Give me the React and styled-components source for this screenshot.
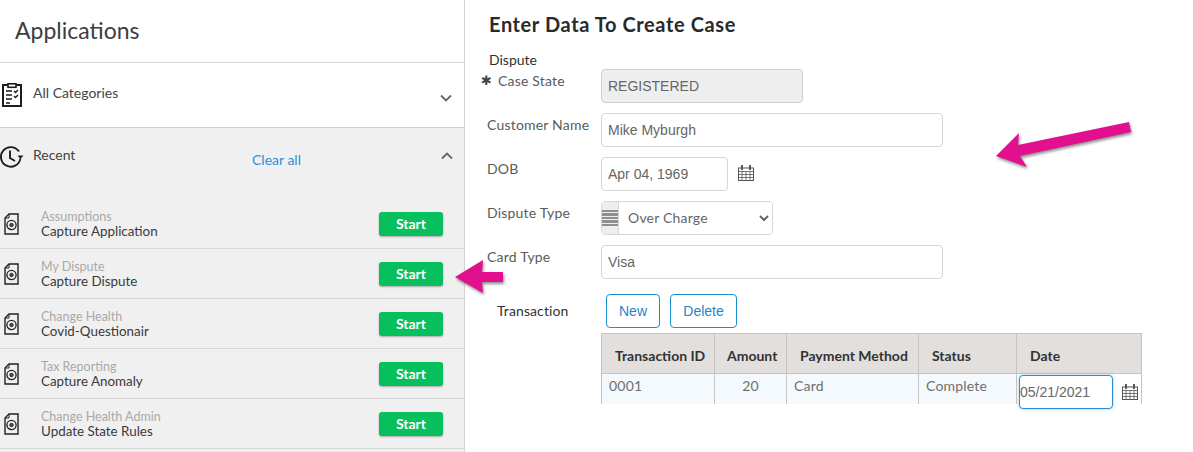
import React from 'react';
import styled, { createGlobalStyle } from 'styled-components';

const GlobalStyle = createGlobalStyle`
  html, body { margin: 0; padding: 0; background: #fff; }
  * { box-sizing: border-box; }
`;

const Page = styled.div`
  position: relative;
  display: flex;
  width: 1193px;
  height: 452px;
  overflow: hidden;
  background: #fff;
`;

/* ---------- left panel ---------- */
const Sidebar = styled.aside`
  width: 465px;
  height: 452px;
  flex: none;
  border-right: 1px solid #d4d4d4;
  font-family: "Lato", "Noto Sans", sans-serif;
  color: #333;
`;
const SideTitle = styled.h2`
  margin: 0;
  height: 63px;
  padding: 15px 0 0 15px;
  border-bottom: 1px solid #d6d6d6;
  font-size: 23px;
  line-height: 31px;
  font-weight: 400;
  color: #3d3d3d;
`;
const Section = styled.div`
  display: flex;
  align-items: flex-start;
  position: relative;
  height: ${(p) => p.$height}px;
  padding-top: ${(p) => p.$top}px;
  background: ${(p) => (p.$open ? '#f0f0f0' : '#fff')};
  border-bottom: ${(p) => (p.$open ? 'none' : '1px solid #d0d0d0')};
`;
const SectionLabel = styled.span`
  width: 219px;
  margin-left: 10px;
  font-size: 14px;
  line-height: 20px;
  color: #444;
`;
const ClearAll = styled.a`
  width: 170px;
  margin-top: 5px;
  font-size: 14px;
  line-height: 20px;
  color: #2a8fdc;
`;
const IconSlot = styled.span`
  display: block;
  width: ${(p) => 23 - (p.$left || 0)}px;
  margin-left: ${(p) => p.$left || 0}px;
  flex: none;
`;
const Chevron = styled.svg`
  width: 14px;
  height: 9px;
  margin-top: ${(p) => p.$top}px;
  margin-left: ${(p) => p.$left || 0}px;
  flex: none;
`;
const RecentList = styled.div`
  background: #f0f0f0;
  height: 254px;
`;
const RecentRow = styled.div`
  display: flex;
  align-items: center;
  height: 50px;
  padding: 0 21px 0 4px;
  border-bottom: 1px solid #d8d8d8;
`;
const DocIcon = styled.svg`
  width: 15px;
  height: 22px;
  flex: none;
`;
const RowText = styled.div`
  flex: 1;
  margin-left: 22px;
  padding-top: 1px;
`;
const RowCategory = styled.div`
  font-size: 12.5px;
  line-height: 15px;
  color: #a9a9a9;
`;
const RowName = styled.div`
  font-size: 13.4px;
  line-height: 15px;
  color: #3a3a3a;
`;
const StartButton = styled.button`
  width: 64px;
  height: 24px;
  padding: 0;
  border: 0;
  border-radius: 3px;
  background: #07bf5c;
  box-shadow: 0 1px 2px rgba(0, 0, 0, 0.3);
  color: #fff;
  font-family: inherit;
  font-size: 14px;
  font-weight: 700;
`;

/* ---------- right form ---------- */
const Main = styled.main`
  flex: 1;
  padding: 13px 0 0 22px;
  font-family: "Lato", "Open Sans", sans-serif;
  color: #444;
`;
const Heading = styled.h1`
  margin: 0 0 0 2px;
  font-size: 20px;
  line-height: 22px;
  font-weight: 700;
  letter-spacing: 0.6px;
  color: #2a2a2a;
`;
const GroupTitle = styled.div`
  margin: 17px 0 1px 2px;
  font-size: 14px;
  line-height: 16px;
  color: #2f2f2f;
`;
const Form = styled.div`
  display: flex;
  flex-direction: column;
  gap: 10px;
`;
const Row = styled.div`
  display: flex;
  align-items: flex-start;
  height: 34px;
`;
const Label = styled.label`
  width: 114px;
  flex: none;
  padding-top: 3px;
  padding-left: ${(p) => (p.$required ? 11 : 0)}px;
  position: relative;
  font-size: 14px;
  line-height: 18px;
  letter-spacing: 0.2px;
  color: #5a5a5a;
`;
const Required = styled.span`
  position: absolute;
  left: -6px;
  top: 4px;
  font-family: "DejaVu Sans", sans-serif;
  font-size: 13px;
  line-height: 16px;
  color: #444;
`;
const TextInput = styled.input`
  width: ${(p) => p.$width}px;
  height: 34px;
  padding: 0 6px;
  border: 1px solid ${(p) => (p.$disabled ? '#cfcfcf' : '#d6d6d6')};
  border-radius: 4px;
  outline: none;
  background: ${(p) => (p.$disabled ? '#eeeeee' : '#fff')};
  font-family: "Liberation Sans", Arial, sans-serif;
  font-size: 14px;
  color: #666;
`;
const CalendarIcon = styled.svg`
  width: 16px;
  height: 16px;
  margin: ${(p) => p.$margin};
  flex: none;
`;
const SelectBox = styled.div`
  display: flex;
  width: 172px;
  height: 34px;
  border: 1px solid #d6d6d6;
  border-radius: 4px;
  overflow: hidden;
`;
const SelectAddon = styled.span`
  display: flex;
  flex-direction: column;
  justify-content: center;
  gap: 1px;
  width: 17px;
  flex: none;
  background: #eeeeee;
  border-right: 1px solid #d6d6d6;

  i {
    display: block;
    height: 2.4px;
    background: #909090;
  }
`;
const Select = styled.select`
  flex: 1;
  min-width: 0;
  border: 0;
  outline: none;
  padding: 0 0 2px 5px;
  background: #fff;
  font-family: "Lato", sans-serif;
  font-size: 14px;
  letter-spacing: 0.2px;
  color: #666;
`;
const ActionRow = styled.div`
  display: flex;
  align-items: center;
  gap: 10px;
  height: 34px;
  margin-top: 15px;
`;
const ActionLabel = styled.span`
  width: 99px;
  margin-left: 10px;
  padding-bottom: 2px;
  font-size: 14px;
  letter-spacing: 0.1px;
  color: #333;
`;
const OutlineButton = styled.button`
  width: ${(p) => p.$width}px;
  height: 34px;
  padding: 0;
  border: 1px solid #1b8ed0;
  border-radius: 4px;
  background: #fff;
  color: #1b86cc;
  font-family: "Liberation Sans", Arial, sans-serif;
  font-size: 14px;
`;
const Table = styled.table`
  width: 540px;
  margin: 5px 0 0 114px;
  border-collapse: collapse;
  table-layout: fixed;
`;
const HeadCell = styled.th`
  width: ${(p) => p.$width}px;
  height: 40px;
  padding: 3px 0 0 ${(p) => p.$pad}px;
  border: 1px solid #c4c4c4;
  background: #e2dfdd;
  text-align: left;
  font-size: 14px;
  font-weight: 700;
  color: #333;
`;
const Cell = styled.td`
  height: 30px;
  padding: 0 0 8px ${(p) => p.$pad}px;
  border: solid #c4c4c4;
  border-width: 0 1px;
  background: #f4f9fd;
  font-size: 14px;
  letter-spacing: 0.2px;
  color: #6e6e6e;
  text-align: ${(p) => p.$align || 'left'};
  white-space: nowrap;
`;
const DateCell = styled.td`
  height: 30px;
  padding: 0;
  border: solid #c4c4c4;
  border-width: 0 1px;
  background: #fff;
`;
const DateWrap = styled.div`
  display: flex;
  align-items: center;
  height: 30px;
  padding: 2px 0 0 2px;
`;
const DateInput = styled.input`
  width: 94px;
  height: 34px;
  margin-bottom: -4px;
  flex: none;
  padding: 0;
  border: 1px solid #2a8fd0;
  border-radius: 4px;
  outline: none;
  box-shadow: 0 0 3px rgba(40, 140, 210, 0.5);
  background: #fff;
  font-family: "Liberation Sans", Arial, sans-serif;
  font-size: 14px;
  color: #666;
`;

/* callout arrows pasted over the screenshot */
const Callout = styled.svg`
  position: absolute;
  left: ${(p) => p.$left}px;
  top: ${(p) => p.$top}px;
  overflow: visible;
  filter: drop-shadow(1px 2px 1.5px rgba(0, 0, 0, 0.45));
`;

const ClipboardGlyph = () => (
  <svg width="20" height="24" viewBox="0 0 20 24" fill="none" stroke="#1d1d1d" style={{ display: 'block' }}>
    <rect x="1" y="2" width="18" height="21" strokeWidth="2" />
    <rect x="6" y="0.8" width="8" height="3.5" fill="#fff" strokeWidth="1.6" />
    <path d="M4 8h6M4 12h6M4 16h6M4 20h4" strokeWidth="1.7" />
    <path d="M12 8l1.5 1.5L16 7M12 13l1.5 1.5L16 12" strokeWidth="1.4" />
  </svg>
);

const ClockGlyph = () => (
  <svg width="24" height="24" viewBox="0 0 24 24" fill="none" stroke="#1d1d1d" style={{ display: 'block' }}>
    <path d="M20.4 13.6A9.8 9.8 0 1 1 19 6.6" strokeWidth="1.9" />
    <path d="M10 5.5v7.5l5 3" strokeWidth="1.9" />
    <path d="M17.5 10.5h6l-3 3.6z" fill="#1d1d1d" stroke="none" />
  </svg>
);

const DocGlyph = () => (
  <DocIcon viewBox="0 0 15 22" fill="none" stroke="#222">
    <path d="M5 1h9v20H1V5z" strokeWidth="1.4" />
    <path d="M5 1v4H1" strokeWidth="1" />
    <circle cx="7.5" cy="12" r="4.6" strokeWidth="1.3" />
    <circle cx="7.5" cy="12" r="1.7" fill="#555" strokeWidth="1" />
  </DocIcon>
);

const CalendarGlyph = ({ margin }) => (
  <CalendarIcon $margin={margin} viewBox="0 0 16 16" fill="none" stroke="#555">
    <rect x="0.5" y="3" width="15" height="12.5" strokeWidth="1" />
    <path d="M0.5 6.5h15M0.5 9.5h15M0.5 12.5h15M4 6.5v9M8 6.5v9M12 6.5v9" strokeWidth="0.8" />
    <path d="M4 0.8v3.4M12 0.8v3.4" strokeWidth="2" strokeLinecap="round" />
  </CalendarIcon>
);

const recents = [
  ['Assumptions', 'Capture Application'],
  ['My Dispute', 'Capture Dispute'],
  ['Change Health', 'Covid-Questionair'],
  ['Tax Reporting', 'Capture Anomaly'],
  ['Change Health Admin', 'Update State Rules'],
];

export default function App() {
  return (
    <Page>
      <GlobalStyle />
      <Sidebar>
        <SideTitle>Applications</SideTitle>
        <Section $height={65} $top={20}>
          <IconSlot $left={2}><ClipboardGlyph /></IconSlot>
          <SectionLabel>All Categories</SectionLabel>
          <Chevron $top={11} $left={187} viewBox="0 0 14 9" fill="none" stroke="#666" strokeWidth="1.8">
            <path d="M2 1.5l5 5 5-5" />
          </Chevron>
        </Section>
        <Section $open $height={71} $top={17}>
          <IconSlot><ClockGlyph /></IconSlot>
          <SectionLabel>Recent</SectionLabel>
          <ClearAll>Clear all</ClearAll>
          <Chevron $top={6} $left={18} viewBox="0 0 14 9" fill="none" stroke="#666" strokeWidth="1.8">
            <path d="M2 7.5l5-5 5 5" />
          </Chevron>
        </Section>
        <RecentList>
          {recents.map(([category, name]) => (
            <RecentRow key={name}>
              <DocGlyph />
              <RowText>
                <RowCategory>{category}</RowCategory>
                <RowName>{name}</RowName>
              </RowText>
              <StartButton>Start</StartButton>
            </RecentRow>
          ))}
        </RecentList>
      </Sidebar>

      <Main>
        <Heading>Enter Data To Create Case</Heading>
        <GroupTitle>Dispute</GroupTitle>
        <Form>
          <Row>
            <Label $required><Required>✱</Required>Case State</Label>
            <TextInput $width={202} $disabled readOnly value="REGISTERED" />
          </Row>
          <Row>
            <Label>Customer Name</Label>
            <TextInput $width={342} readOnly value="Mike Myburgh" />
          </Row>
          <Row>
            <Label>DOB</Label>
            <TextInput $width={127} readOnly value="Apr 04, 1969" />
            <CalendarGlyph margin="8px 0 0 10px" />
          </Row>
          <Row>
            <Label>Dispute Type</Label>
            <SelectBox>
              <SelectAddon><i /><i /><i /><i /><i /></SelectAddon>
              <Select defaultValue="Over Charge">
                <option>Over Charge</option>
              </Select>
            </SelectBox>
          </Row>
          <Row>
            <Label>Card Type</Label>
            <TextInput $width={342} readOnly value="Visa" />
          </Row>
        </Form>
        <ActionRow>
          <ActionLabel>Transaction</ActionLabel>
          <OutlineButton $width={54}>New</OutlineButton>
          <OutlineButton $width={67}>Delete</OutlineButton>
        </ActionRow>
        <Table>
          <thead>
            <tr>
              <HeadCell $width={113} $pad={13}>Transaction ID</HeadCell>
              <HeadCell $width={72} $pad={12}>Amount</HeadCell>
              <HeadCell $width={132} $pad={13}>Payment Method</HeadCell>
              <HeadCell $width={98} $pad={13}>Status</HeadCell>
              <HeadCell $width={125} $pad={13}>Date</HeadCell>
            </tr>
          </thead>
          <tbody>
            <tr>
              <Cell $pad={7}>0001</Cell>
              <Cell $pad={0} $align="center">20</Cell>
              <Cell $pad={7}>Card</Cell>
              <Cell $pad={7}>Complete</Cell>
              <DateCell>
                <DateWrap>
                  <DateInput readOnly value="05/21/2021" />
                  <CalendarGlyph margin="4px 0 0 9px" />
                </DateWrap>
              </DateCell>
            </tr>
          </tbody>
        </Table>
      </Main>

      <Callout $left={995} $top={121} width="137" height="46" viewBox="0 0 137 46">
        <path d="M1 35L24 12L23 24L134 1L136 11L25 35L32 46z" fill="#e20f8f" />
      </Callout>
      <Callout $left={455} $top={260} width="49" height="33" viewBox="0 0 49 33">
        <path d="M0 17L28 0L27 12H48V22H27L28 33z" fill="#e20f8f" />
      </Callout>
    </Page>
  );
}
